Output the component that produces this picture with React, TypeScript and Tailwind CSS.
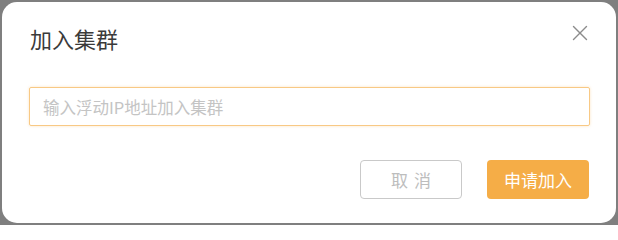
import { X } from 'lucide-react';

export default function App() {
  return (
    <div
      className="w-[618px] h-[225px] bg-[#7f7f7f] p-[2px]"
      style={{ fontFamily: '"Noto Sans CJK SC", "Noto Sans", sans-serif' }}
    >
      <div className="relative h-[221px] w-[614px] rounded-[15px] bg-white px-[27px] pt-[21px]">
        {/* 标题 */}
        <h2 className="pl-[1px] text-[22px] leading-[30px] font-normal text-[#3a3a3a]">加入集群</h2>
        <button type="button" className="absolute right-[23px] top-[18px] text-[#8c8c8c]">
          <X size={26} strokeWidth={1.3} />
        </button>

        {/* 输入框 */}
        <input
          autoFocus
          type="text"
          placeholder="输入浮动IP地址加入集群"
          className="mt-[34px] block h-[39px] w-[561px] rounded-[2px] border border-[#f8c985] pl-[13px] text-[16.5px] text-[#333] outline-none shadow-[0_0_3px_rgba(247,186,100,0.4)] placeholder:text-[#c4c4c4] caret-black"
        />

        {/* 按钮 */}
        <div className="mt-[34px] flex justify-end gap-[25px]">
          <button
            type="button"
            className="h-[39px] w-[102px] rounded-[4px] border border-[#c9c9c9] bg-white pl-[6px] text-[17px] tracking-[6px] text-[#bdbdbd]"
          >
            取消
          </button>
          <button
            type="button"
            className="h-[39px] w-[102px] rounded-[4px] bg-[#f5ad47] text-[17px] text-white"
          >
            申请加入
          </button>
        </div>
      </div>
    </div>
  );
}
